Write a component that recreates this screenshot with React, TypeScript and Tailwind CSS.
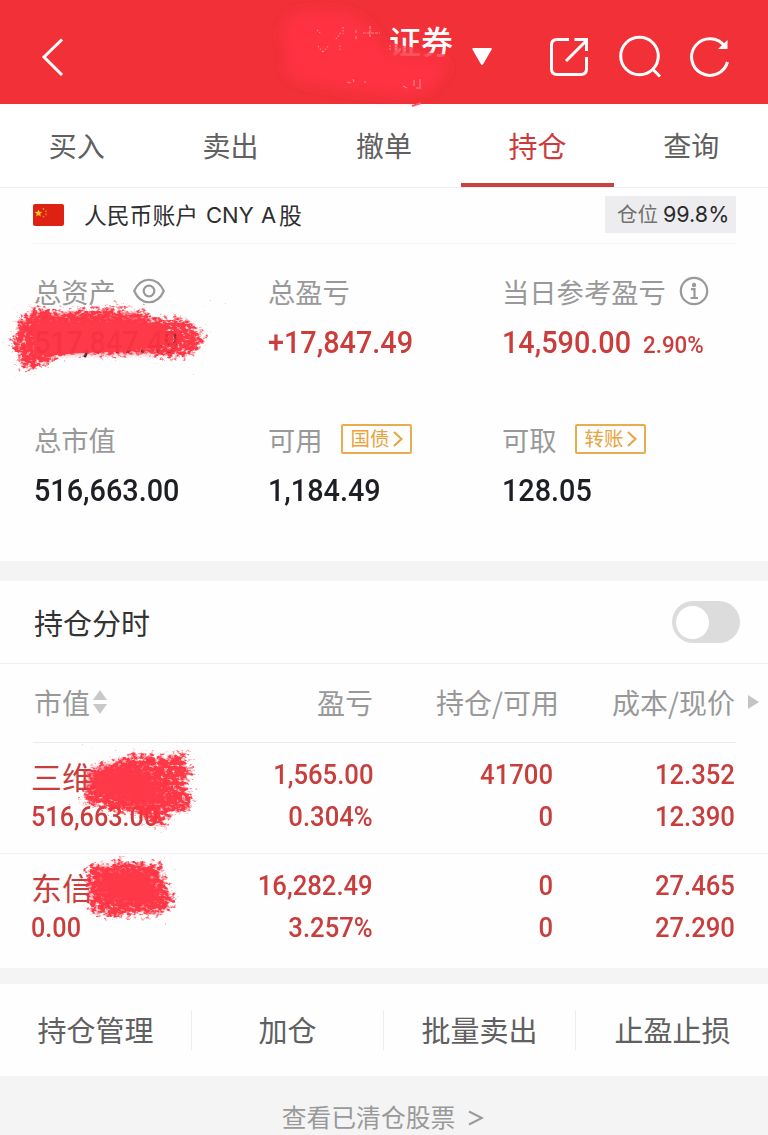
import React from "react";

const CJK = "font-['Noto_Sans_CJK_SC',sans-serif]";
const DIN = "font-[Roboto,'Noto_Sans_CJK_SC',sans-serif]";

function Num({ children, className = "" }: { children: React.ReactNode; className?: string }) {
  return (
    <span className={`inline-block whitespace-nowrap font-medium ${DIN} ${className}`}>{children}</span>
  );
}

function ScribbleFilters() {
  return (
    <svg className="absolute h-0 w-0" aria-hidden="true">
      <filter id="chalk" x="-10%" y="-15%" width="120%" height="130%" colorInterpolationFilters="sRGB">
        <feTurbulence type="fractalNoise" baseFrequency="0.04 0.2" numOctaves="2" seed="4" result="wave" />
        <feDisplacementMap in="SourceGraphic" in2="wave" scale="20" xChannelSelector="R" yChannelSelector="G" result="rough" />
        <feGaussianBlur in="rough" stdDeviation="4" result="soft" />
        <feTurbulence type="fractalNoise" baseFrequency="0.22 0.34" numOctaves="3" seed="9" result="grain" />
        <feComposite in="soft" in2="grain" operator="arithmetic" k1="0" k2="0.66" k3="1" k4="-0.42" result="mix" />
        <feColorMatrix in="mix" type="matrix" values="0 0 0 0 1  0 0 0 0 0.196  0 0 0 0 0.259  0 0 0 3.6 -1.35" />
      </filter>
      <filter id="haze" x="-20%" y="-20%" width="140%" height="140%">
        <feGaussianBlur stdDeviation="4" />
      </filter>
      <filter id="glow" x="-20%" y="-20%" width="140%" height="140%">
        <feGaussianBlur stdDeviation="6" />
      </filter>
    </svg>
  );
}

function Header() {
  return (
    <header className="relative flex h-[104px] items-center bg-[#f13038] text-white">
      <svg className="ml-[38px] mt-[10px]" width="30" height="44" viewBox="38 35 30 44" fill="none" stroke="currentColor" strokeWidth="3">
        <path d="M62 39.5 L44 57 L62 75" />
      </svg>
      <div className={`ml-[321px] mb-[25px] w-[66px] text-[32px] leading-[40px] font-medium whitespace-nowrap ${CJK}`}>证券</div>
      <svg className="ml-[17px] mt-[10px]" width="20" height="18" viewBox="0 0 20 18" fill="currentColor">
        <path d="M0.5 1.5 Q0 0 1.5 0 H18.5 Q20.5 0 19.5 1.8 L11.2 16 Q10 18 8.8 16 Z" />
      </svg>
      <div className="ml-[57px] mt-[10px] flex items-center gap-[28px]">
        <svg width="42" height="44" viewBox="549 35 42 44" fill="none" stroke="currentColor" strokeWidth="3">
          <path d="M569 39.5 H557 Q551.5 39.5 551.5 45 V69 Q551.5 74.5 557 74.5 H581 Q586.5 74.5 586.5 69 V57" />
          <path d="M574.5 39.5 H586.5 V51 M566 61 L587 40" />
        </svg>
        <svg width="42" height="44" viewBox="618 35 42 44" fill="none" stroke="currentColor" strokeWidth="3">
          <circle cx="638.5" cy="56" r="18.8" />
          <path d="M651.5 69 L659 76.5" />
        </svg>
        <svg width="42" height="44" viewBox="689 35 42 44" fill="none" stroke="currentColor" strokeWidth="3">
          <path d="M724.5 46 A18.3 18.3 0 1 0 727.5 62" />
          <path d="M727.5 40 V49 H718 Z" fill="currentColor" stroke="none" />
        </svg>
      </div>
      <svg className="absolute left-[260px] top-0" width="210" height="110" viewBox="260 0 210 110" aria-hidden="true">
        <path
          d="M294 14 Q322 8 350 14 Q366 20 374 34 L386 54 Q402 58 416 60 L442 62 Q450 64 444 74 Q436 84 428 90 Q410 97 388 94 Q340 90 306 82 Q282 76 286 64 Q290 54 284 42 Q278 28 294 14 Z"
          fill="#ff3343"
          filter="url(#glow)"
        />
        <path d="M384 44 L390 42 L400 45 L416 48 L424 52 L450 55 V62 H384 Z" fill="#fa3240" opacity="0.8" />
        <g stroke="#ffd0d3" strokeWidth="1.2" fill="none" opacity="0.5">
          <path d="M317 30 l4 4 M318 46 l5 6 M323 52 l6 -7 M336 39 l5 -7 M340 50 v-6 M343 27 v7" strokeDasharray="1.5 1.5" />
          <path d="M356 30 v3 M356 36 v3 M363 33 h17 M370 26 v11" strokeDasharray="3 1" />
          <path d="M347 82 l4 1 M353 79 l1 3 M364 82 h2 M403 86 l4 2 M414 80 v6 M420 79 v8 M416 88 h5" />
          <path d="M390 45 v5 M396 45 v5 M405 46 v5" strokeDasharray="2 1" />
        </g>
        <path d="M412 106 l9 -3" stroke="#ff5964" strokeWidth="2" />
      </svg>
    </header>
  );
}

function Tabs() {
  const tabs = ["买入", "卖出", "撤单", "持仓", "查询"];
  return (
    <nav className={`grid h-[84px] grid-cols-5 border-b border-[#eeeeee] bg-white text-center text-[28px] ${CJK}`}>
      {tabs.map((t) => (
        <div
          key={t}
          className={
            t === "持仓"
              ? "h-[83px] border-b-4 border-[#cb4142] text-[29px] leading-[82px] text-[#cc3b39]"
              : "leading-[83px] text-[#606060]"
          }
        >
          {t}
        </div>
      ))}
    </nav>
  );
}

function Account() {
  return (
    <div className="ml-[33px] mr-[32px] flex h-[56px] items-center border-b border-[#f4f4f4] pb-px">
      <svg width="31" height="22" viewBox="0 0 31 22">
        <rect width="31" height="22" rx="2" fill="#dd2213" />
        <path d="M5.5 5.4 l1.1 2.4 2.6 .2 -2 1.8 .6 2.6 -2.3 -1.4 -2.3 1.4 .6 -2.6 -2 -1.8 2.6 -.2z" fill="#fbc625" />
        <g fill="#e98a20">
          <circle cx="10.5" cy="5" r="0.9" />
          <circle cx="13" cy="7.3" r="0.9" />
          <circle cx="13" cy="10.4" r="0.9" />
          <circle cx="10.5" cy="12.6" r="0.9" />
        </g>
      </svg>
      <div className="ml-[20px] flex items-center whitespace-nowrap text-[22.8px] leading-[30px] text-[#2f2f2f]">
        <span className={`w-[122px] -mt-px ${CJK}`}>人民币账户</span>
        <span className="w-[55px] font-[Inter,sans-serif] text-[22px]">CNY</span>
        <span className="w-[18px] font-[Inter,sans-serif] text-[22px]">A</span>
        <span className={`-mt-px ${CJK}`}>股</span>
      </div>
      <div className="ml-auto -mt-px flex h-[37px] w-[131px] items-center whitespace-nowrap bg-[#ededf0] pl-[12px]">
        <span className={`w-[46px] -mt-[2px] text-[20.5px] text-[#717171] ${CJK}`}>仓位</span>
        <span className="font-[Inter,sans-serif] text-[21.5px] text-[#2a2a2c]">99.8%</span>
      </div>
    </div>
  );
}

function Label({ children }: { children: React.ReactNode }) {
  return (
    <div className={`flex h-[40px] items-center whitespace-nowrap text-[27.3px] leading-[40px] text-[#999999] ${CJK}`}>
      {children}
    </div>
  );
}

function LinkTag({ children }: { children: React.ReactNode }) {
  return (
    <span className="ml-[18px] -mt-px flex h-[30px] w-[71px] items-center rounded-[2px] border-2 border-[#e9ad50] pl-[8px] text-[19.5px] leading-[24px] text-[#e8a33d]">
      <span className="-mt-[2px]">{children}</span>
      <svg className="ml-[2px]" width="12" height="18" viewBox="0 0 12 18" fill="none" stroke="currentColor" strokeWidth="2">
        <path d="M2 2 L9.5 9 L2 16" />
      </svg>
    </span>
  );
}

const big = "origin-left scale-x-[0.9] text-[32px] leading-[40px]";

function Summary() {
  return (
    <section className="relative grid h-[317px] grid-cols-[234px_234px_1fr] grid-rows-[148px_1fr] pl-[34px] pt-[27px]">
      <div>
        <Label>
          总资产
          <svg className="ml-[17px]" width="32" height="26" viewBox="0 0 32 26" fill="none" stroke="#999" strokeWidth="2.2">
            <path d="M1.2 13 C8 -2 24 -2 30.8 13 C24 28 8 28 1.2 13 Z" />
            <circle cx="16" cy="13" r="5.3" />
          </svg>
        </Label>
        <div className="mt-[11px]"><Num className={`${big} text-[#1d1f25]`}>517,847.49</Num></div>
      </div>
      <div>
        <Label>总盈亏</Label>
        <div className="mt-[11px]"><Num className={`${big} text-[#cb3d3b]`}>+17,847.49</Num></div>
      </div>
      <div>
        <Label>
          当日参考盈亏
          <svg className="ml-[13px]" width="30" height="30" viewBox="0 0 30 30" fill="none" stroke="#999" strokeWidth="2.2">
            <circle cx="15" cy="15" r="13.2" />
            <circle cx="15" cy="9" r="2.2" fill="#999" stroke="none" />
            <path d="M12 13.2 H15.5 V22 M11.5 22 H19" />
          </svg>
        </Label>
        <div className="mt-[11px] flex whitespace-nowrap text-[#cb3d3b]">
          <Num className={`w-[141px] ${big}`}>14,590.00</Num>
          <Num className="mt-[3px] origin-left scale-x-[0.93] text-[24px] leading-[40px]">2.90%</Num>
        </div>
      </div>
      <div>
        <Label>总市值</Label>
        <div className="mt-[11px]"><Num className={`${big} text-[#1d1f25]`}>516,663.00</Num></div>
      </div>
      <div>
        <Label>可用<LinkTag>国债</LinkTag></Label>
        <div className="mt-[11px]"><Num className={`${big} text-[#1d1f25]`}>1,184.49</Num></div>
      </div>
      <div>
        <Label>可取<LinkTag>转账</LinkTag></Label>
        <div className="mt-[11px]"><Num className={`${big} text-[#1d1f25]`}>128.05</Num></div>
      </div>
      <svg className="absolute left-0 top-[46px]" width="230" height="90" viewBox="0 290 230 90" aria-hidden="true">
        <g opacity="0.97">
          <path d="M28 311 L100 307 L148 310 L154 319 L190 320 L206 336 L198 352 L174 356 L150 356 L112 353 L62 355 L32 371 L18 368 L20 352 L10 350 L18 318 Z" fill="#f34" filter="url(#chalk)" />
          <path d="M32 317 H140 L152 328 L160 332 V350 L120 351 H44 L30 348 Z" fill="#ff3343" filter="url(#haze)" />
          <path d="M34 324 H166 V344 L120 352 H100 L34 356 Z" fill="#ff3343" />
        </g>
      </svg>
    </section>
  );
}

const HOLDINGS = [
  { name: "三维", value: "516,663.00", pl: "1,565.00", rate: "0.304%", qty: "41700", free: "0", cost: "12.352", price: "12.390" },
  { name: "东信", value: "0.00", pl: "16,282.49", rate: "3.257%", qty: "0", free: "0", cost: "27.465", price: "27.290" },
];

function Pair({ top, bottom }: { top: string; bottom: string }) {
  return (
    <div className="flex flex-col items-end text-[28.5px] leading-[42px]">
      <Num className="origin-right scale-x-[0.9]">{top}</Num>
      <Num className="origin-right scale-x-[0.9]">{bottom}</Num>
    </div>
  );
}

function Holdings() {
  return (
    <section className="relative">
      <div className="flex h-[83px] items-center border-b border-[#f0f0f0] pl-[34px] pr-[28px]">
        <span className={`text-[29px] leading-[40px] text-[#333333] ${CJK}`}>持仓分时</span>
        <span className="ml-auto flex h-[42px] w-[68px] items-center rounded-full bg-[#dcdcdc] pl-[4px]">
          <span className="h-[33px] w-[33px] rounded-full bg-white" />
        </span>
      </div>
      <div className={`flex h-[78px] items-center whitespace-nowrap text-[28px] leading-[40px] text-[#999999] ${CJK}`}>
        <div className="flex w-[187px] items-center pl-[34px]">
          <span className="-mt-[2px]">市值</span>
          <svg className="ml-[3px] -mt-[3px]" width="14" height="24" viewBox="0 0 14 24" fill="#c8c8c8">
            <path d="M7 0 L14 10 H0 Z M0 14 H14 L7 24 Z" />
          </svg>
        </div>
        <span className="-mt-[2px] w-[186px] text-right">盈亏</span>
        <span className="-mt-[2px] w-[186px] text-right">持仓/可用</span>
        <span className="-mt-[2px] w-[176px] text-right">成本/现价</span>
        <svg className="ml-[13px] -mt-[3px]" width="11" height="14" viewBox="0 0 11 14" fill="#c4c4c4">
          <path d="M0 0 L11 7 L0 14 Z" />
        </svg>
      </div>
      <div className="ml-[33px] mr-[32px] h-px bg-[#ebebeb]" />
      {HOLDINGS.map((h, i) => (
        <div
          key={h.name}
          className={`grid grid-cols-[199px_143px_180px_182px] pl-[31px] pt-[11px] text-[#c93e3c] ${i === 0 ? "h-[111px] border-b border-[#f3f3f3]" : "h-[114px]"}`}
        >
          <div className="flex flex-col items-start">
            <span className={`pt-[2px] text-[31px] leading-[40px] ${CJK}`}>{h.name}</span>
            <Num className="origin-left scale-x-[0.9] text-[28px] leading-[42px]">{h.value}</Num>
          </div>
          <Pair top={h.pl} bottom={h.rate} />
          <Pair top={h.qty} bottom={h.free} />
          <Pair top={h.cost} bottom={h.price} />
        </div>
      ))}
      <svg className="absolute left-[60px] top-[159px]" width="160" height="190" viewBox="60 740 160 190" aria-hidden="true">
        <g opacity="0.97">
          <path d="M88 768 L120 759 L150 753 L186 752 L188 762 L198 770 L188 784 L194 798 L188 812 L170 814 L172 828 L152 826 L136 814 L108 810 L78 804 L86 786 Z" fill="#f34" filter="url(#chalk)" />
          <path d="M92 772 L124 764 L150 768 L158 786 L172 804 L150 808 L110 800 L92 788 Z" fill="#ff3343" filter="url(#haze)" />
          <path d="M86 865 L118 860 L160 863 L166 880 L176 898 L170 914 L144 918 L102 916 L88 908 L84 890 Z" fill="#f34" filter="url(#chalk)" />
          <path d="M98 870 L148 869 L158 888 L160 907 L120 905 L96 894 Z" fill="#ff3343" filter="url(#haze)" />
        </g>
      </svg>
    </section>
  );
}

export default function App() {
  const actions = ["持仓管理", "加仓", "批量卖出", "止盈止损"];
  return (
    <div className="relative h-[1135px] w-[768px] overflow-hidden bg-[#fefefe]">
      <ScribbleFilters />
      <Header />
      <Tabs />
      <Account />
      <Summary />
      <div className="h-[20px] bg-[#f4f4f4]" />
      <Holdings />
      <div className="h-[16px] bg-[#f4f4f4]" />
      <div className={`grid h-[92px] grid-cols-4 items-center text-center text-[29px] leading-[40px] text-[#606060] ${CJK}`}>
        {actions.map((a, i) => (
          <div key={a} className={i < 3 ? "border-r border-[#ececec]" : "pl-px"}>
            <span className="relative -top-px">{a}</span>
          </div>
        ))}
      </div>
      <footer className={`flex h-[60px] items-center justify-center bg-[#f4f4f4] pt-[22px] pr-[2px] text-[24.8px] text-[#999999] ${CJK}`}>
        <span>查看已清仓股票</span>
        <svg className="ml-[13px] mt-[1px]" width="16" height="16" viewBox="0 0 16 16" fill="none" stroke="currentColor" strokeWidth="2">
          <path d="M1 1.5 L14 8 L1 14.5" />
        </svg>
      </footer>
    </div>
  );
}
